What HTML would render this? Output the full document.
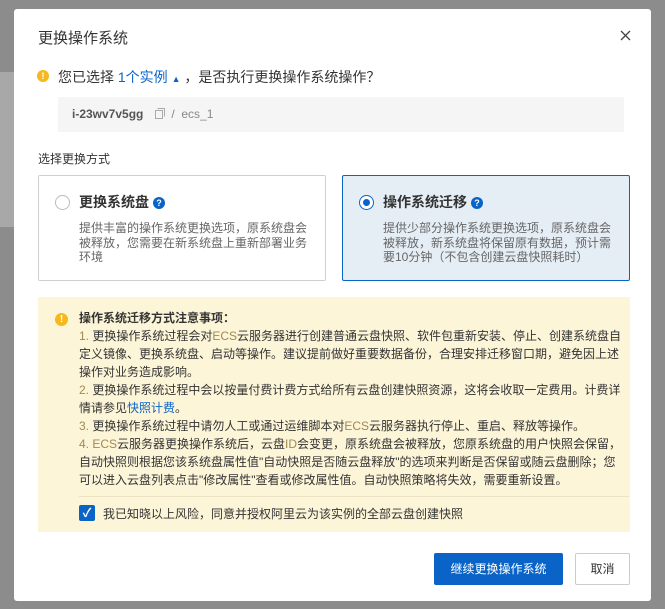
<!DOCTYPE html>
<html><head><meta charset="utf-8"><style>
*{margin:0;padding:0;box-sizing:border-box}
body{width:665px;height:609px;background:#8c8c8c;font-family:"Liberation Sans","Noto Sans CJK SC",sans-serif;position:relative;overflow:hidden;color:#333}
.bgstrip{position:absolute;left:0;top:72px;width:14px;height:155px;background:#a8a8a8}
.dlg{position:absolute;left:14px;top:9px;width:637px;height:592px;background:#fff;border-radius:3px}
.a{position:absolute;white-space:nowrap}
.card{position:absolute;top:166px;width:288px;height:106px;border:1px solid #cfcfcf;border-radius:2px}
.radio{position:absolute;left:16px;top:19px;width:15px;height:15px;border:1px solid #bbb;border-radius:50%;background:#fff}
.q{display:inline-block;width:12px;height:12px;border-radius:50%;background:#0a64c8;color:#fff;font-size:9px;text-align:center;line-height:12px;font-weight:bold;vertical-align:1px;margin-left:4px}
.ct{position:absolute;left:40px;top:16px;font-size:14px;font-weight:bold;color:#333}
.cd{position:absolute;left:40px;top:45px;width:230px;font-size:12px;line-height:14.5px;color:#666}
.notice{position:absolute;left:24px;top:288px;width:592px;height:235px;background:#fdf5d8}
.nt{position:absolute;left:41px;top:12px;width:543px;font-size:12px;line-height:18px;color:#333}
.nt b{font-weight:bold}
.n{color:#a08a50}
</style></head><body>
<div class="bgstrip"></div>
<div class="dlg">
<div class="a" style="left:24px;top:18px;font-size:15px;color:#333">更换操作系统</div>
<svg class="a" style="left:606px;top:21px" width="11" height="11" viewBox="0 0 11 11"><path d="M1 1L10 10M10 1L1 10" stroke="#444" stroke-width="1.3"/></svg>
<div class="a" style="left:23px;top:61px;width:12px;height:12px;border-radius:50%;background:#f5b81e;color:#fff;font-size:9px;text-align:center;line-height:12px;font-weight:bold">!</div>
<div class="a" style="left:44px;top:58px;font-size:14px;color:#333">您已选择 <span style="color:#0a64c8">1个实例 <span style="font-size:9px">▲</span></span> ，是否执行更换操作系统操作？</div>
<div class="a" style="left:44px;top:88px;width:566px;height:35px;background:#f5f5f5"></div>
<div class="a" style="left:58px;top:98px;font-size:12px;color:#555;font-weight:bold">i-23wv7v5gg <svg style="margin-left:8px;vertical-align:-1px" width="10" height="11" viewBox="0 0 10 11"><rect x="0.5" y="2.5" width="7" height="8" fill="none" stroke="#aaa"/><path d="M2.5 0.5H9.5V8.5" fill="none" stroke="#aaa"/></svg><span style="color:#888;font-weight:normal">&nbsp; / &nbsp;ecs_1</span></div>
<div class="a" style="left:24px;top:141px;font-size:12px;color:#333">选择更换方式</div>
<div class="card" style="left:24px"><div class="radio"></div><div class="ct">更换系统盘<span class="q">?</span></div><div class="cd">提供丰富的操作系统更换选项，原系统盘会被释放，您需要在新系统盘上重新部署业务环境</div></div>
<div class="card" style="left:328px;border-color:#0a64c8;background:#e5edf5"><div class="radio" style="border-color:#0a64c8"><div style="position:absolute;left:3px;top:3px;width:7px;height:7px;border-radius:50%;background:#0a64c8"></div></div><div class="ct">操作系统迁移<span class="q">?</span></div><div class="cd">提供少部分操作系统更换选项，原系统盘会被释放，新系统盘将保留原有数据，预计需要10分钟（不包含创建云盘快照耗时）</div></div>
<div class="notice">
<div class="a" style="left:17px;top:16px;width:13px;height:13px;border-radius:50%;background:#f5b81e;color:#fff;font-size:10px;text-align:center;line-height:13px;font-weight:bold">!</div>
<div class="nt"><b>操作系统迁移方式注意事项：</b><br><span class="n">1.</span> 更换操作系统过程会对<span class="n">ECS</span>云服务器进行创建普通云盘快照、软件包重新安装、停止、创建系统盘自定义镜像、更换系统盘、启动等操作。建议提前做好重要数据备份，合理安排迁移窗口期，避免因上述操作对业务造成影响。<br><span class="n">2.</span> 更换操作系统过程中会以按量付费计费方式给所有云盘创建快照资源，这将会收取一定费用。计费详情请参见<span style="color:#0a64c8">快照计费</span>。<br><span class="n">3.</span> 更换操作系统过程中请勿人工或通过运维脚本对<span class="n">ECS</span>云服务器执行停止、重启、释放等操作。<br><span class="n">4. ECS</span>云服务器更换操作系统后，云盘<span class="n">ID</span>会变更，原系统盘会被释放，您原系统盘的用户快照会保留，自动快照则根据您该系统盘属性值"自动快照是否随云盘释放"的选项来判断是否保留或随云盘删除；您可以进入云盘列表点击"修改属性"查看或修改属性值。自动快照策略将失效，需要重新设置。</div>
<div class="a" style="left:41px;top:199px;width:550px;height:1px;background:#ece3c4"></div>
<div class="a" style="left:41px;top:208px;width:16px;height:16px;background:#0a64c8;border-radius:2px;color:#fff;font-size:12px;text-align:center;line-height:16px;font-weight:bold">✓</div>
<div class="a" style="left:65px;top:208px;font-size:12px;color:#333">我已知晓以上风险，同意并授权阿里云为该实例的全部云盘创建快照</div>
</div>
<div class="a" style="left:420px;top:544px;width:129px;height:32px;background:#0a64c8;color:#fff;font-size:12px;text-align:center;line-height:32px;border-radius:2px">继续更换操作系统</div>
<div class="a" style="left:561px;top:544px;width:55px;height:32px;border:1px solid #ccc;color:#333;font-size:12px;text-align:center;line-height:30px;border-radius:2px">取消</div>
</div>
</body></html>
